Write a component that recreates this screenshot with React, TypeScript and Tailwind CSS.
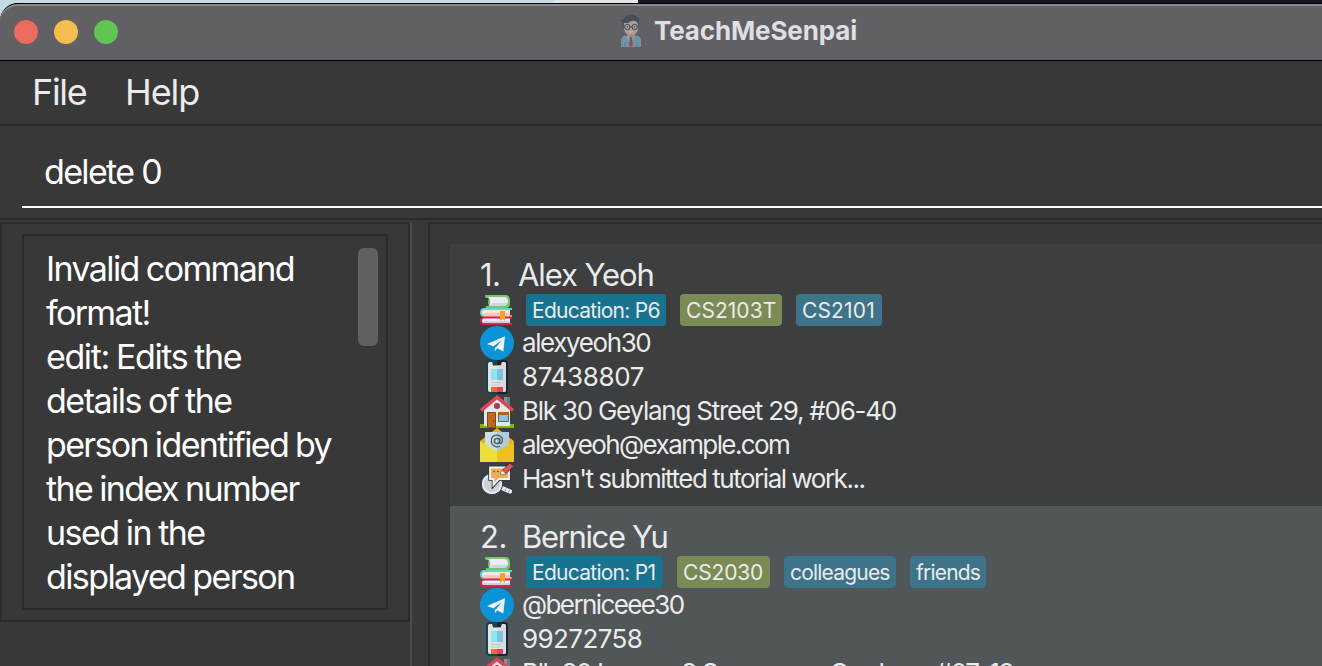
import React from "react";

const Books = () => (
  <svg width="34" height="34" viewBox="0 0 34 34" className="block shrink-0">
    <path d="M5 3H25Q30 3 30 8V12Q30 16 26 16H6V14H9Q7 10 9 6H6Q5 5 5 3Z" fill="#7ac46b" />
    <path d="M8 5H24Q28 5 28 9Q28 13 24 14H9Q12 9 8 5Z" fill="#e9edf5" />
    <path d="M12 11H27Q26 14 24 14H10Z" fill="#cfd5e4" />
    <path d="M3 16H32V18H30V23H32V25H3Q0 24 0 20.500Q0 17 3 16Z" fill="#5fd6cb" />
    <path d="M3 23.500H32V25H3Z" fill="#ef6f78" />
    <path d="M4 18H30V23.500H4Q2 23 2 20.700Q2 18 4 18Z" fill="#fbe8dc" />
    <path d="M4 21H30V23.500H4Z" fill="#f3cdbb" />
    <path d="M4 25H32V26.500H30V31H32V33H3Q0 32 0 28.500Q0 25.500 4 25Z" fill="#dd1f4f" />
    <path d="M4 26.500H30V31H4Q2 31 2 28.700Q2 26.500 4 26.500Z" fill="#edf0f8" />
    <path d="M4 29H30V31H4Z" fill="#cdd2e3" />
    <path d="M20 19H25V29L22.500 27L20 29Z" fill="#f5a524" />
  </svg>
);

const Telegram = () => (
  <svg width="34" height="34" viewBox="0 0 34 34" className="block shrink-0">
    <circle cx="17" cy="17" r="17" fill="#0b93d8" />
    <path d="M7 18L25 10.300L23.300 25.500L17.200 22.200L15 25L13.800 20.500Z" fill="#f2f2f2" />
    <path d="M13.500 20.300L21.500 14.300L16 21.500L15 25Z" fill="#0b93d8" />
    <path d="M15.200 21L16.800 22.300L15.200 25Z" fill="#f2f2f2" />
  </svg>
);

const Phone = () => (
  <svg width="34" height="34" viewBox="0 0 34 34" className="block shrink-0">
    <rect x="6" y="0" width="22" height="34" rx="3.500" fill="#114850" />
    <path d="M17 0H24.500Q28 0 28 3.500V30.500Q28 34 24.500 34H17Z" fill="#172636" />
    <path d="M10 2H12L13 5.500H21L22 2H24Q26 2 26 4V30Q26 32 24 32H10Q8 32 8 30V4Q8 2 10 2Z" fill="#e6e4e3" />
    <path d="M17 5.500H21L22 2H24Q26 2 26 4V30Q26 32 24 32H17Z" fill="#dbd9d9" />
    <path d="M11 9H17V20H11Z" fill="#8fe5ee" />
    <path d="M17 9H23V20H17Z" fill="#75c6e2" />
    <path d="M11 22.500H21M11 25H19" stroke="#c7c4c5" strokeWidth="1" />
    <path d="M11 27H17V32H11Z" fill="#ed6b3b" />
    <path d="M17 27H23V32H17Z" fill="#e4405c" />
  </svg>
);

const House = () => (
  <svg width="34" height="34" viewBox="0 0 34 34" className="block shrink-0">
    <path d="M24 3H30V14L24 9Z" fill="#83929c" />
    <path d="M27 3H30V14L27 11Z" fill="#6d7c87" />
    <path d="M0 30H34V34H0Z" fill="#7cb518" />
    <path d="M17 4L30 16V32H4V16Z" fill="#e4e7ed" />
    <path d="M17 1L34 15L32 18L17 5.500L2 18L0 15Z" fill="#dd4654" />
    <circle cx="17" cy="12" r="2.200" fill="#5c6670" stroke="#b52d42" strokeWidth="1.500" />
    <path d="M7.500 18.500H15.500V33.500H7.500Z" fill="#bd6a20" stroke="#864813" />
    <circle cx="13.500" cy="27" r=".7" fill="#63350f" />
    <path d="M18.500 18.500H28.500V27.500H18.500Z" fill="#8ac3e0" stroke="#9b5518" />
    <path d="M18 18H29V21H18Z" fill="#af611f" />
  </svg>
);

const Mail = () => (
  <svg width="34" height="34" viewBox="0 0 34 34" className="block shrink-0">
    <path d="M0 13L17 0L34 13L17 26Z" fill="#edb20f" />
    <path d="M5 4H29V17L17 27L5 17Z" fill="#cae0e6" />
    <path d="M17 4H29V17L17 27Z" fill="#aecdd9" />
    <circle cx="17" cy="13" r="2.600" fill="none" stroke="#43545c" strokeWidth="1.300" />
    <path d="M19.600 10V14.500Q20.200 16 21.800 14.800Q23.800 9.500 19.500 7.700Q13.500 5.900 11.500 11Q10.500 17 15.500 18.600Q18 19.200 20 18.200" fill="none" stroke="#43545c" strokeWidth="1.200" />
    <path d="M0 13L17 23.500V34H0Z" fill="#ebdf38" />
    <path d="M34 13L17 23.500V34H34Z" fill="#ecc01e" />
  </svg>
);

const Feedback = () => (
  <svg width="34" height="34" viewBox="0 0 34 34" className="block shrink-0">
    <path d="M22 26L30 29.500" stroke="#26394f" strokeWidth="6" strokeLinecap="round" />
    <path d="M22 26L30 29.500" stroke="#edf0f2" strokeWidth="4.200" strokeLinecap="round" />
    <path d="M26 26.500L25 29M29.500 28L28.500 30.500" stroke="#596b7b" strokeWidth=".8" />
    <circle cx="12" cy="22" r="10.700" fill="#edf0f2" stroke="#26394f" />
    <circle cx="12" cy="22" r="8.300" fill="#ccd1d4" />
    <path d="M10 5.500H29V17H19L13.500 23V17H10Z" fill="#f0ac58" stroke="#26394f" strokeWidth="3.600" />
    <path d="M10 5.500H29V17H19L13.500 23V17H10Z" fill="#f0ac58" stroke="#f2f4f5" strokeWidth="1.800" />
    <circle cx="14" cy="9.500" r=".8" fill="#634a32" />
    <circle cx="18" cy="9.500" r=".8" fill="#634a32" />
    <path d="M20.500 12.500L22 8.500L30 1L33.500 4.500L25.500 12Z" fill="#e2574c" stroke="#26394f" strokeWidth=".8" />
    <path d="M20.500 12.500L22 8.500L25.500 12Z" fill="#f2f4f5" />
  </svg>
);

const Teacher = () => (
  <svg width="22" height="34" viewBox="0 0 22 34" className="block shrink-0">
    <path d="M7 18H15V25H7Z" fill="#a08a80" />
    <path d="M1 33V27Q1 22 6 21.500L11 23L16 21.500Q21 22 21 27V33Z" fill="#7193a8" />
    <path d="M5 28V33M17 28V33" stroke="#5b7f9e" />
    <path d="M4 6H18V15Q17 21 11 21Q5 21 4 15Z" fill="#b39a8e" />
    <path d="M3 13V9L0 6Q4 5 6 2Q11-1 16 2Q20 3 19 8V13L17 8Q13 5 8 9H4Z" fill="#454d58" />
    <circle cx="7.300" cy="13" r="2.700" fill="#929da8" stroke="#3f4955" strokeWidth="1" />
    <circle cx="14.700" cy="13" r="2.700" fill="#929da8" stroke="#3f4955" strokeWidth="1" />
    <path d="M10 13H12M7 13H8M14 13H15" stroke="#3f4955" strokeWidth="1.200" />
    <path d="M8.500 17.500Q11 19.500 13.500 17.500Z" fill="#d0c0b9" />
    <path d="M7 21L11 24L15 21L13 26L11 23L8 26Z" fill="#8eacbb" />
    <path d="M9.500 23H12.500L12 26L13 31L11 33L9 31L10 26Z" fill="#a0454f" />
  </svg>
);

type Tag = { label: string; box: string };
type Person = {
  index: string;
  name: string;
  nameClass: string;
  card: string;
  tags: Tag[];
  rows: { icon: React.ReactNode; text: string; tracking: string }[];
};

const people: Person[] = [
  {
    index: "1.",
    name: "Alex Yeoh",
    nameClass: "pl-[38px] tracking-[-1.1px]",
    card: "bg-[#3c3e3f]",
    tags: [
      { label: "Education: P6", box: "w-[140px] bg-[#17738f] tracking-[-0.73px]" },
      { label: "CS2103T", box: "w-[102px] bg-[#7b8b56] tracking-[0.05px]" },
      { label: "CS2101", box: "w-[86px] bg-[#3e7489] tracking-[0.15px]" },
    ],
    rows: [
      { icon: <Telegram />, text: "alexyeoh30", tracking: "tracking-[-1.4px]" },
      { icon: <Phone />, text: "87438807", tracking: "tracking-[-0.35px]" },
      { icon: <House />, text: "Blk 30 Geylang Street 29, #06-40", tracking: "tracking-[-1.25px]" },
      { icon: <Mail />, text: "alexyeoh@example.com", tracking: "tracking-[-1.6px]" },
      { icon: <Feedback />, text: "Hasn't submitted tutorial work...", tracking: "tracking-[-1.47px]" },
    ],
  },
  {
    index: "2.",
    name: "Bernice Yu",
    nameClass: "pl-[42px] tracking-[-1.35px]",
    card: "bg-[#515658]",
    tags: [
      { label: "Education: P1", box: "w-[137px] bg-[#17738f] tracking-[-0.73px]" },
      { label: "CS2030", box: "w-[93px] bg-[#7b8b56] tracking-[-0.15px]" },
      { label: "colleagues", box: "w-[112px] bg-[#3e7489] tracking-[-0.8px]" },
      { label: "friends", box: "w-[76px] bg-[#3e7489] tracking-[-0.8px]" },
    ],
    rows: [
      { icon: <Telegram />, text: "@berniceee30", tracking: "tracking-[-1.6px]" },
      { icon: <Phone />, text: "99272758", tracking: "tracking-[-0.6px]" },
      { icon: <House />, text: "Blk 30 Lorong 3 Serangoon Gardens, #07-18", tracking: "tracking-[-1.37px]" },
    ],
  },
];

const resultLines = [
  { text: "Invalid command", tracking: "tracking-[-1.6px]" },
  { text: "format!", tracking: "tracking-[-1.65px]" },
  { text: "edit: Edits the", tracking: "tracking-[-1.4px]" },
  { text: "details of the", tracking: "tracking-[-1.5px]" },
  { text: "person identified by", tracking: "tracking-[-1.65px]" },
  { text: "the index number", tracking: "tracking-[-1.6px]" },
  { text: "used in the", tracking: "tracking-[-1.5px]" },
  { text: "displayed person", tracking: "tracking-[-1.6px]" },
];

function PersonCard({ person }: { person: Person }) {
  return (
    <article className={`shrink-0 pt-[15px] pb-[10px] pl-[30px] text-[#ebebeb] ${person.card}`}>
      <div className="flex h-8 items-center text-[31px] leading-8">
        <span className="w-0 tracking-[-0.5px]">{person.index}</span>
        <h2 className={person.nameClass}>{person.name}</h2>
      </div>
      <div className="flex h-[35px] items-end">
        <Books />
        <div className="ml-3 flex gap-3.5">
          {person.tags.map((tag) => (
            <span
              key={tag.label}
              className={`h-8 rounded-[4px] pl-1.5 text-[21px] leading-[33px] ${tag.box}`}
            >
              {tag.label}
            </span>
          ))}
        </div>
      </div>
      {person.rows.map((row) => (
        <div key={row.text} className="flex h-[34px] items-center">
          {row.icon}
          <span className={`ml-2 text-[26px] leading-[34px] ${row.tracking}`}>{row.text}</span>
        </div>
      ))}
    </article>
  );
}

export default function App() {
  return (
    <div className="flex h-[666px] w-[1322px] flex-col overflow-hidden bg-[#383838] font-['Inter',sans-serif] whitespace-nowrap">
      <div className="bg-[linear-gradient(90deg,#c4dbe3_0_554px,#e5e5e5_554px_638px,#171520_638px)] pt-[3px]">
        <header className="flex h-[58px] items-center rounded-tl-[18px] border-t border-b border-black bg-[#606065] shadow-[inset_0_2px_0_#898a8d]">
          <div className="flex gap-4 pl-3.5">
            <span className="size-6 rounded-full bg-[#ed6a5e]" />
            <span className="size-6 rounded-full bg-[#f5bf4f]" />
            <span className="size-6 rounded-full bg-[#61c554]" />
          </div>
          <div className="ml-[502px] flex items-center pb-[3px]">
            <Teacher />
            <h1 className="ml-[12px] text-[26px] font-bold tracking-[-0.13px] text-[#dfdfe2]">TeachMeSenpai</h1>
          </div>
        </header>
      </div>
      <nav className="flex h-[65px] shrink-0 border-b-2 border-[#2b2b2b] pl-[32px] text-[36px] leading-[63px] text-[#ebebeb]">
        <span className="w-[93px] tracking-[-1.3px]">File</span>
        <span className="tracking-[-1.1px]">Help</span>
      </nav>
      <div className="h-[94px] shrink-0 border-b-2 border-[#2b2b2b] pl-[22px]">
        <div className="h-[82px] border-b-2 border-white pl-[22px] text-[34px] leading-[92px] tracking-[-1.65px] text-white">
          delete 0
        </div>
      </div>
      <main className="flex min-h-0 flex-1 pt-0.5">
        <aside className="h-[400px] w-[410px] shrink-0 border-2 border-[#2b2b2b] px-5 py-2.5">
          <div className="flex h-[376px] justify-between border-2 border-[#2b2b2b] pt-[11px] pr-[8px] pl-[22px]">
            <div className="text-[34px] leading-[44px] text-white [word-spacing:-1px]">
              {resultLines.map((line) => (
                <p key={line.text} className={line.tracking}>
                  {line.text}
                </p>
              ))}
            </div>
            <div className="mt-px h-[98px] w-5 rounded-[6px] bg-[#606060]" />
          </div>
        </aside>
        <div className="w-0.5 shrink-0 bg-[#4c4c4c]" />
        <section className="ml-4 min-w-0 flex-1 overflow-hidden border-t-2 border-l-2 border-[#2b2b2b] pt-5 pl-5">
          {people.map((person) => (
            <PersonCard key={person.name} person={person} />
          ))}
        </section>
      </main>
    </div>
  );
}
